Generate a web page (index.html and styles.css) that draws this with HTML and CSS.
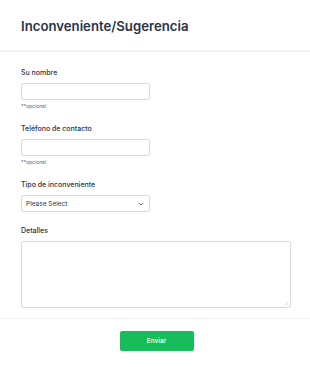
FILE: index.html
```html
<!DOCTYPE html>
<html lang="es">
<head>
<meta charset="utf-8">
<title>Inconveniente/Sugerencia</title>
<link rel="stylesheet" href="styles.css">
</head>
<body>
<div class="page">
  <header class="header">
    <h1 class="title">Inconveniente/Sugerencia</h1>
  </header>
  <form class="form">
    <div class="field">
      <label class="label">Su nombre</label>
      <input class="input" type="text">
      <div class="sub">**opcional</div>
    </div>
    <div class="field">
      <label class="label">Teléfono de contacto</label>
      <input class="input" type="text">
      <div class="sub">**opcional</div>
    </div>
    <div class="field">
      <label class="label">Tipo de inconveniente</label>
      <div class="select">
        <span>Please Select</span>
        <svg class="chev" width="6" height="4" viewBox="0 0 6 4"><path d="M0.8 0.8 L3 3 L5.2 0.8" fill="none" stroke="#6f7688" stroke-width="1"/></svg>
      </div>
    </div>
    <div class="field last">
      <label class="label">Detalles</label>
      <div class="textarea">
        <svg class="grip" width="5" height="5" viewBox="0 0 5 5"><path d="M4.5 1 L1 4.5 M4.5 3 L3 4.5" stroke="#b5b9c4" stroke-width="0.6"/></svg>
      </div>
    </div>
  </form>
  <div class="actions">
    <button class="button" type="button">Enviar</button>
  </div>
</div>
</body>
</html>
```
FILE: styles.css
```css
* { box-sizing: border-box; }
html, body { margin: 0; padding: 0; background: #fff; }
body { font-family: Inter, "Noto Sans", "Liberation Sans", sans-serif; color: #2c3345; }
.page { width: 310px; }
.header { padding: 16px 21px 14px; border-bottom: 2px solid #f3f3f5; }
.title { margin: 0; font-size: 13.2px; line-height: 20px; font-weight: 600; color: #2c3345; letter-spacing: 0; }
.form { padding: 16px 19px 0 21px; }
.field { padding-bottom: 14px; }
.field.last { padding-bottom: 10px; }
.label { display: block; font-size: 7px; line-height: 10px; font-weight: 500; color: #2c3345; margin-bottom: 5px; }
.input { display: block; width: 129px; height: 17px; margin: 0; padding: 0 4px; border: 1px solid #d8dae3; border-radius: 2px; background: #fff; font: inherit; }
.sub { margin-top: 3px; font-size: 5px; line-height: 7px; color: #57647e; }
.select { width: 129px; height: 17px; border: 1px solid #d8dae3; border-radius: 2px; display: flex; align-items: center; justify-content: space-between; padding: 0 5px 0 4px; font-size: 6.5px; color: #2c3345; }
.chev { display: block; }
.textarea { width: 270px; height: 67px; border: 1px solid #d8dae3; border-radius: 2px; display: flex; align-items: flex-end; justify-content: flex-end; padding: 1px; }
.grip { display: block; }
.actions { border-top: 1px solid #f1f1f3; padding-top: 12px; display: flex; justify-content: center; }
.button { width: 74px; height: 20px; margin: 0; padding: 0; border: 0; border-radius: 2px; background: #18bd5b; color: #fff; font-family: inherit; font-size: 6.5px; font-weight: 500; margin-left: 3px; }
```
